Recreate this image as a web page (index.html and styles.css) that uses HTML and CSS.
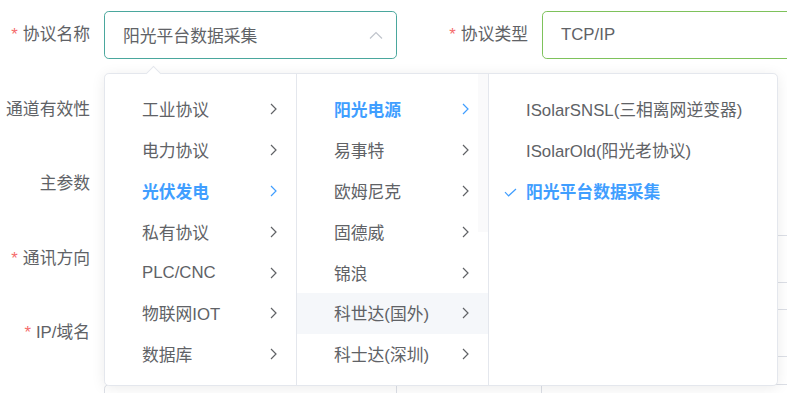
FILE: index.html
```html
<!DOCTYPE html>
<html lang="zh-CN">
<head>
<meta charset="utf-8">
<title>协议配置</title>
<link rel="stylesheet" href="styles.css">
</head>
<body>
<div class="page">
  <form class="form">
    <div class="row">
      <div class="item">
        <label class="label"><span class="req">*</span>协议名称</label>
        <div class="control select is-focus">
          <span class="value">阳光平台数据采集</span>
          <svg class="caret" width="14" height="8" viewBox="0 0 14 8"><path d="M1 7.5 L7 1.5 L13 7.5" fill="none" stroke="#c0c4cc" stroke-width="1.2"/></svg>
        </div>
      </div>
      <div class="item">
        <label class="label"><span class="req">*</span>协议类型</label>
        <div class="control input is-success"><span class="value">TCP/IP</span></div>
      </div>
    </div>
    <div class="row">
      <div class="item">
        <label class="label">通道有效性</label>
        <div class="control blank"></div>
      </div>
      <div class="item"></div>
    </div>
    <div class="row">
      <div class="item">
        <label class="label">主参数</label>
        <div class="control input"></div>
      </div>
      <div class="item"></div>
    </div>
    <div class="row">
      <div class="item">
        <label class="label"><span class="req">*</span>通讯方向</label>
        <div class="control input"></div>
      </div>
      <div class="item">
        <label class="label"></label>
        <div class="control input"></div>
      </div>
    </div>
    <div class="row">
      <div class="item">
        <label class="label"><span class="req">*</span>IP/域名</label>
        <div class="control input"></div>
      </div>
      <div class="item">
        <label class="label"></label>
        <div class="control input"></div>
      </div>
    </div>
    <div class="row">
      <div class="table">
        <div class="cell c1"></div>
        <div class="cell c2"></div>
        <div class="cell c3"></div>
      </div>
    </div>
  </form>

  <div class="cascader">
    <span class="arrow"></span>
    <div class="panel p1">
      <ul class="list">
        <li class="node"><span class="txt">工业协议</span><svg class="chev" width="7" height="12" viewBox="0 0 7 12"><path d="M1 1 L6 6 L1 11" fill="none" stroke="#606266" stroke-width="1.2"/></svg></li>
        <li class="node"><span class="txt">电力协议</span><svg class="chev" width="7" height="12" viewBox="0 0 7 12"><path d="M1 1 L6 6 L1 11" fill="none" stroke="#606266" stroke-width="1.2"/></svg></li>
        <li class="node active"><span class="txt">光伏发电</span><svg class="chev" width="7" height="12" viewBox="0 0 7 12"><path d="M1 1 L6 6 L1 11" fill="none" stroke="#409eff" stroke-width="1.2"/></svg></li>
        <li class="node"><span class="txt">私有协议</span><svg class="chev" width="7" height="12" viewBox="0 0 7 12"><path d="M1 1 L6 6 L1 11" fill="none" stroke="#606266" stroke-width="1.2"/></svg></li>
        <li class="node"><span class="txt">PLC/CNC</span><svg class="chev" width="7" height="12" viewBox="0 0 7 12"><path d="M1 1 L6 6 L1 11" fill="none" stroke="#606266" stroke-width="1.2"/></svg></li>
        <li class="node"><span class="txt">物联网IOT</span><svg class="chev" width="7" height="12" viewBox="0 0 7 12"><path d="M1 1 L6 6 L1 11" fill="none" stroke="#606266" stroke-width="1.2"/></svg></li>
        <li class="node"><span class="txt">数据库</span><svg class="chev" width="7" height="12" viewBox="0 0 7 12"><path d="M1 1 L6 6 L1 11" fill="none" stroke="#606266" stroke-width="1.2"/></svg></li>
      </ul>
    </div>
    <div class="panel p2">
      <span class="thumb"></span>
      <ul class="list">
        <li class="node active"><span class="txt">阳光电源</span><svg class="chev" width="7" height="12" viewBox="0 0 7 12"><path d="M1 1 L6 6 L1 11" fill="none" stroke="#409eff" stroke-width="1.2"/></svg></li>
        <li class="node"><span class="txt">易事特</span><svg class="chev" width="7" height="12" viewBox="0 0 7 12"><path d="M1 1 L6 6 L1 11" fill="none" stroke="#606266" stroke-width="1.2"/></svg></li>
        <li class="node"><span class="txt">欧姆尼克</span><svg class="chev" width="7" height="12" viewBox="0 0 7 12"><path d="M1 1 L6 6 L1 11" fill="none" stroke="#606266" stroke-width="1.2"/></svg></li>
        <li class="node"><span class="txt">固德威</span><svg class="chev" width="7" height="12" viewBox="0 0 7 12"><path d="M1 1 L6 6 L1 11" fill="none" stroke="#606266" stroke-width="1.2"/></svg></li>
        <li class="node"><span class="txt">锦浪</span><svg class="chev" width="7" height="12" viewBox="0 0 7 12"><path d="M1 1 L6 6 L1 11" fill="none" stroke="#606266" stroke-width="1.2"/></svg></li>
        <li class="node hover"><span class="txt">科世达(国外)</span><svg class="chev" width="7" height="12" viewBox="0 0 7 12"><path d="M1 1 L6 6 L1 11" fill="none" stroke="#606266" stroke-width="1.2"/></svg></li>
        <li class="node"><span class="txt">科士达(深圳)</span><svg class="chev" width="7" height="12" viewBox="0 0 7 12"><path d="M1 1 L6 6 L1 11" fill="none" stroke="#606266" stroke-width="1.2"/></svg></li>
      </ul>
    </div>
    <div class="panel p3">
      <ul class="list">
        <li class="node"><span class="txt">ISolarSNSL(三相离网逆变器)</span></li>
        <li class="node"><span class="txt">ISolarOld(阳光老协议)</span></li>
        <li class="node active"><svg class="check" width="13" height="9" viewBox="0 0 13 9"><path d="M1 4.2 L4.6 7.8 L12 1" fill="none" stroke="#409eff" stroke-width="1.2"/></svg><span class="txt">阳光平台数据采集</span></li>
      </ul>
    </div>
  </div>
</div>
</body>
</html>
```

FILE: styles.css
```css
html, body {
  margin: 0;
  padding: 0;
  overflow: hidden;
  background: #ffffff;
}

body {
  font-family: "Liberation Sans", "Noto Sans CJK SC", sans-serif;
  font-size: 16.8px;
  color: #606266;
}

.page {
  position: relative;
  width: 787px;
  height: 393px;
  overflow: hidden;
}

.form {
  padding-top: 11px;
  width: 900px;
}

.row {
  display: flex;
  gap: 41px;
  height: 48px;
  margin-bottom: 26.6px;
}

.item {
  display: flex;
  width: 397px;
  flex: none;
}

.label {
  width: 104px;
  flex: none;
  box-sizing: border-box;
  padding-right: 14px;
  text-align: right;
  line-height: 48px;
  white-space: nowrap;
}

.req {
  color: #f56c6c;
  margin-right: 5px;
}

.control {
  width: 293px;
  height: 48px;
  box-sizing: border-box;
  border: 1px solid #dcdfe6;
  border-radius: 4.8px;
  display: flex;
  align-items: center;
  padding: 0 17px 0 18px;
}

.control.blank {
  border-color: transparent;
}

.control.is-focus {
  border-color: #4aa79d;
}

.control.is-success {
  border-color: #7ec25b;
}

.value {
  flex: 1;
  color: #606266;
}

.caret {
  display: block;
  margin-right: -4px;
}

.table {
  margin-left: 104px;
  display: flex;
  height: 48px;
  border: 1px solid #dcdfe6;
  border-radius: 4.8px;
}

.cell {
  height: 100%;
  box-sizing: border-box;
}

.c1 { width: 292px; border-right: 1px solid #dcdfe6; }
.c2 { width: 145px; border-right: 1px solid #dcdfe6; }
.c3 { width: 300px; }

/* cascader dropdown (overlay) */
.cascader {
  position: absolute;
  left: 104px;
  top: 73px;
  width: 674px;
  height: 313px;
  box-sizing: border-box;
  background: #ffffff;
  border: 1px solid #e4e7ed;
  border-radius: 4.8px;
  box-shadow: 0 2px 14px rgba(0, 0, 0, 0.08);
  display: flex;
}

.arrow {
  position: absolute;
  top: -6px;
  left: 43px;
  width: 10px;
  height: 10px;
  background: #ffffff;
  border-top: 1px solid #e4e7ed;
  border-left: 1px solid #e4e7ed;
  transform: rotate(45deg);
}

.panel {
  position: relative;
  height: 100%;
  box-sizing: border-box;
  flex: none;
}

.p1 { width: 192px; border-right: 1px solid #e4e7ed; }
.p2 { width: 192px; border-right: 1px solid #e4e7ed; }
.p3 { flex: 1; }

.thumb {
  position: absolute;
  right: 0;
  top: 0;
  width: 10px;
  height: 158px;
  background: #fafafb;
}

.list {
  list-style: none;
  margin: 0;
  padding: 15px 0 0;
  position: relative;
}

.node {
  position: relative;
  display: flex;
  align-items: center;
  height: 40.8px;
  padding: 0 19px 0 37px;
  white-space: nowrap;
}

.node .txt {
  flex: 1;
}

.node.hover {
  background: #f5f7fa;
}

.node.active {
  color: #409eff;
  font-weight: 700;
}

.chev {
  display: block;
  flex: none;
}

.check {
  position: absolute;
  left: 15px;
  top: 17px;
}
```
